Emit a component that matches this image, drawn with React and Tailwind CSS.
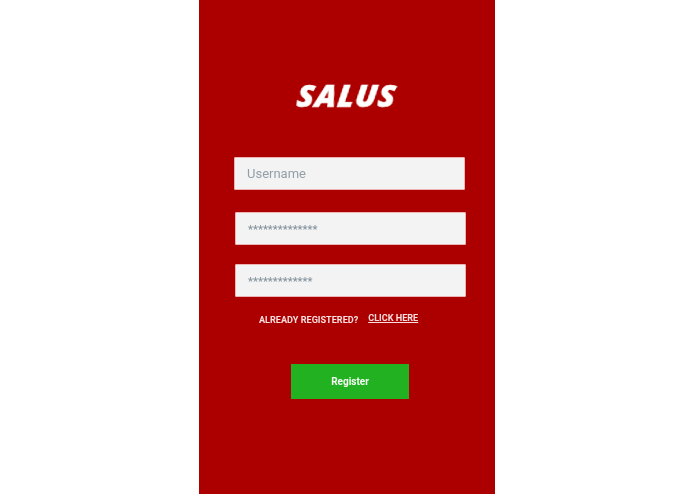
export default function App() {
  return (
    <div className="flex h-[494px] w-[695px] overflow-hidden bg-white font-['Roboto',sans-serif]">
      <div className="ml-[199px] flex h-full w-[296px] shrink-0 flex-col bg-[#ac0000]">
        <div className="mt-[77px] flex h-[36px] items-center justify-center">
          <span className="origin-center scale-x-[1.08] -skew-x-6 font-['Open_Sans',sans-serif] text-[29px] leading-none font-extrabold tracking-[1px] text-white italic blur-[0.5px] [-webkit-text-stroke:0.6px_white]">
            SALUS
          </span>
        </div>
        <div className="mt-[44px] ml-[35px] flex h-[33px] w-[231px] items-center rounded-[1px] border border-[#eeb4b4] bg-[#f3f3f3] pl-[12px] text-[13px] text-[#929fa8] blur-[0.5px]">
          Username
        </div>
        <div className="mt-[22px] ml-[36px] flex h-[33px] w-[231px] items-center rounded-[1px] border border-[#eeb4b4] bg-[#f3f3f3] pt-[3px] pl-[12px] text-[11.2px] font-medium text-[#84929c] blur-[0.5px]">
          **************
        </div>
        <div className="mt-[19px] ml-[36px] flex h-[33px] w-[231px] items-center rounded-[1px] border border-[#eeb4b4] bg-[#f3f3f3] pt-[3px] pl-[12px] text-[11.2px] font-medium text-[#84929c] blur-[0.5px]">
          *************
        </div>
        <div className="mt-[15px] ml-[60px] flex items-start text-[9.1px] leading-[12px] font-bold text-[#f8dede] blur-[0.4px]">
          <span className="mt-[2px]">ALREADY REGISTERED?</span>
          <span className="ml-[10px] underline">CLICK HERE</span>
        </div>
        <div className="mt-[38px] ml-[92px] flex h-[35px] w-[118px] items-center justify-center bg-[#22b120] text-[10px] font-bold text-[#f4fbf2] blur-[0.4px]">
          Register
        </div>
      </div>
    </div>
  );
}
